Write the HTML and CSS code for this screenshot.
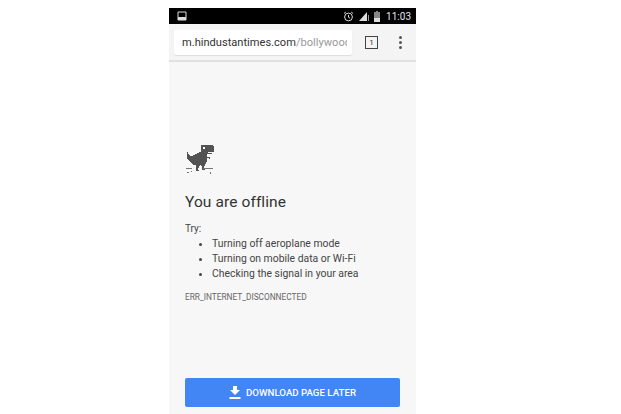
FILE: index.html
```html
<!DOCTYPE html>
<html lang="en">
<head>
  <meta charset="UTF-8" />
  <title>You are offline</title>
  <link rel="stylesheet" href="styles.css">
</head>
<body>
  <div class="phone">
    <div class="status-bar">
      <svg class="status-photo" width="10" height="10" viewBox="0 0 10 10">
        <path d="M1 1h8v8H1z" fill="none" stroke="#ddd" stroke-width="1"/>
        <path d="M1 6h8v3H1z" fill="#ddd"/>
      </svg>
      <div class="status-right">
        <svg width="11" height="11" viewBox="0 0 11 11">
          <circle cx="5.500" cy="6" r="3.900" fill="none" stroke="#ddd" stroke-width="1"/>
          <path d="M5.500 4v2.200l1.500 1M1 2.500 2.800 1M10 2.500 8.200 1" fill="none" stroke="#ddd" stroke-width="1"/>
        </svg>
        <svg width="10" height="10" viewBox="0 0 10 10">
          <path d="M0 10 8 1v9z" fill="#ddd"/>
          <path d="M9 4h1v6H9z" fill="#999"/>
        </svg>
        <svg width="6" height="11" viewBox="0 0 6 11">
          <path d="M2 0h2v1h2v10H0V1h2z" fill="#888"/>
          <path d="M0 7h6v4H0z" fill="#ddd"/>
        </svg>
        <span class="status-time">11:03</span>
      </div>
    </div>

    <div class="toolbar">
      <div class="url-box"><div class="url-text"><span class="url-host">m.hindustantimes.com</span><span class="url-path">/bollywood</span></div></div>
      <div class="tab-count">1</div>
      <div class="menu-dots"><i></i><i></i><i></i></div>
    </div>

    <div class="content">
      <svg class="dino" width="30" height="31" viewBox="0 0 30 31" shape-rendering="crispEdges">
        <path fill="#535353" d="M15 0h12v1h1v6h-6v1h4v1h-5v3h3v2h-1v-1h-2v4h-1v2h-1v2h-1v3h1v1h-3v-4h-1v-1h-1v1h-1v2h-1v2h1v1h-3v-6H7v-1H6v-1H5v-1H4v-1H3v-1H2v-1H1V7h1v2h1v1h1v1h3v-1h2V9h2V8h2V7h2V1h-1z"/>
        <rect x="17" y="2" width="2" height="2" fill="#f7f7f7"/>
        <path fill="#777" d="M0 23h6v1H0zM17 23h10v1H17zM1 27h2v1H1zM5 26h1v1H5zM24 27h1v2h-1z"/>
      </svg>

      <h1 class="title">You are offline</h1>
      <p class="try">Try:</p>
      <ul class="tips">
        <li>Turning off aeroplane mode</li>
        <li>Turning on mobile data or Wi-Fi</li>
        <li>Checking the signal in your area</li>
      </ul>
      <div class="err-code">ERR_INTERNET_DISCONNECTED</div>

      <div class="spacer"></div>

      <button class="download-btn">
        <svg width="12" height="13" viewBox="0 0 12 13">
          <path d="M4 0h4v4h3L6 9 1 4h3zM0.500 11h11v2H0.500z" fill="#fff"/>
        </svg>
        DOWNLOAD PAGE LATER
      </button>
    </div>
  </div>
</body>
</html>
```

FILE: styles.css
```css
html, body {
  margin: 0;
  height: 414px;
  overflow: hidden;
  background: #fff;
}
body {
  font-family: Roboto, sans-serif;
  padding: 8px 0 0 169px;
  box-sizing: border-box;
}
.phone {
  width: 247px;
  height: 406px;
  display: flex;
  flex-direction: column;
  background: #f7f7f7;
}
.status-bar {
  height: 16px;
  background: #000;
  display: flex;
  align-items: center;
  justify-content: space-between;
  padding: 0 5px 0 8px;
  flex-shrink: 0;
}
.status-right {
  display: flex;
  align-items: center;
  gap: 5px;
}
.status-time {
  color: #e4e4e4;
  font-size: 10px;
  margin-left: 1px;
}
.toolbar {
  height: 38px;
  box-sizing: border-box;
  background: #f4f4f4;
  border-bottom: 2px solid #e0e0e0;
  display: flex;
  align-items: center;
  padding: 0 0 0 5px;
  flex-shrink: 0;
}
.url-box {
  width: 178px;
  height: 25px;
  background: #fff;
  border-radius: 2px;
  box-shadow: 0 1px 1px #ddd;
  padding-left: 8px;
  box-sizing: border-box;
  font-size: 11.1px;
  line-height: 25px;
}
.url-text {
  width: 165px;
  white-space: nowrap;
  overflow: hidden;
}
.url-host { color: #333; }
.url-path { color: #999; }
.tab-count {
  width: 11px;
  height: 11px;
  border: 1px solid #444;
  margin-left: 13px;
  font-size: 8px;
  line-height: 11px;
  text-align: center;
  color: #333;
}
.menu-dots {
  margin-left: 21px;
  display: flex;
  flex-direction: column;
  gap: 2px;
}
.menu-dots i {
  display: block;
  width: 3px;
  height: 3px;
  border-radius: 50%;
  background: #555;
}
.content {
  flex: 1;
  display: flex;
  flex-direction: column;
  padding: 83px 16px 7px;
  min-height: 0;
}
.dino {
  display: block;
  margin: 0 0 16px 1px;
}
.title {
  font-size: 15.5px;
  font-weight: 400;
  color: #333;
  margin: 0 0 9px;
  line-height: 20px;
  letter-spacing: 0.1px;
}
.try {
  font-size: 10px;
  color: #444;
  margin: 0;
  line-height: 15px;
}
.tips {
  margin: 0 0 10px;
  padding: 0 0 0 27px;
  font-size: 10.4px;
  line-height: 15px;
  color: #444;
}
.err-code {
  font-size: 8.3px;
  color: #666;
  line-height: 12px;
}
.spacer { flex: 1; }
.download-btn {
  height: 29px;
  width: 215px;
  border: none;
  border-radius: 2px;
  background: #4285f4;
  color: #fff;
  font-family: inherit;
  font-size: 9.7px;
  font-weight: 500;
  display: flex;
  align-items: center;
  justify-content: center;
  gap: 5px;
  padding: 0;
}
```
